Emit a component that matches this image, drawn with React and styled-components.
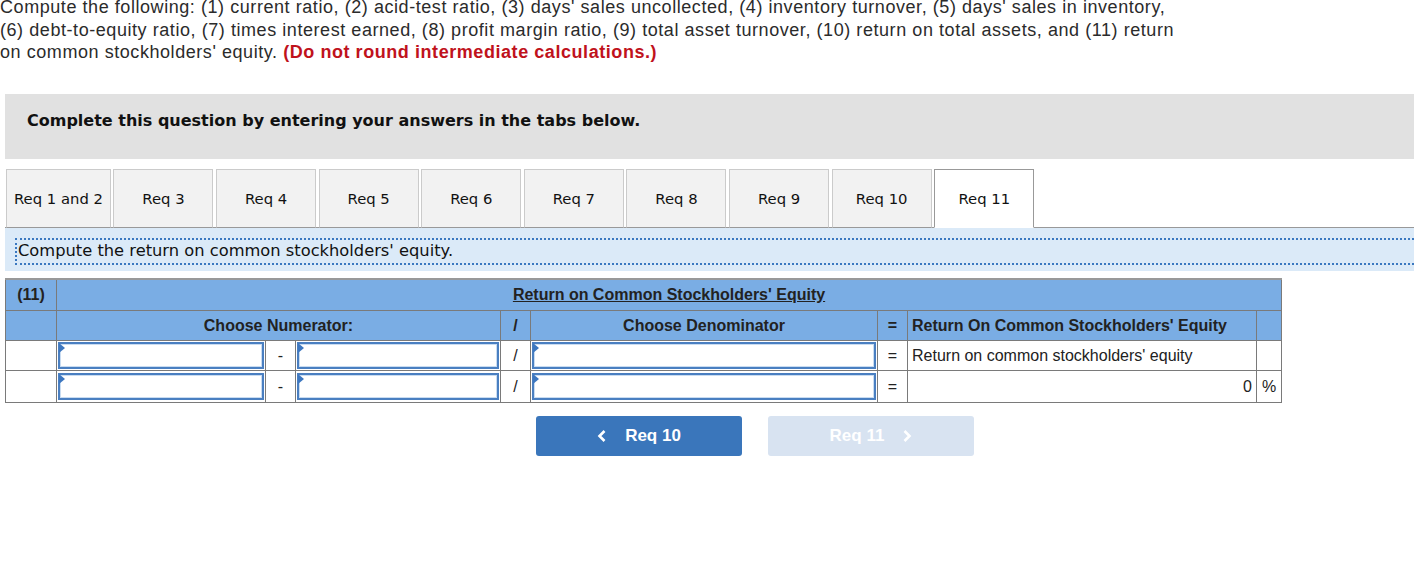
import React from 'react';
import styled, {createGlobalStyle} from 'styled-components';

const GlobalStyle = createGlobalStyle`
    html, body {
        margin: 0;
        padding: 0;
        background: #fff;
        overflow: hidden;
    }
`;

const Page = styled.div`
    width: 1414px;
    height: 567px;
    font-family: "Liberation Sans", Arial, sans-serif;
    color: #222;
`;

const Intro = styled.p`
    margin: -4px 0 0 0;
    font-size: 18px;
    letter-spacing: 0.56px;
    line-height: 22.5px;
    color: #2b2b2b;
    white-space: nowrap;
`;

const Warn = styled.strong`
    color: #c0121c;
    font-weight: 700;
`;

const Body = styled.div`
    padding-left: 5px;
    margin-top: 30px;
`;

const Prompt = styled.div`
    background: #e1e1e1;
    height: 65px;
    padding: 17px 22px 0;
    box-sizing: border-box;
    font-family: "DejaVu Sans", Verdana, sans-serif;
    font-weight: bold;
    font-size: 16px;
    color: #111;
`;

const TabRow = styled.div`
    display: flex;
    gap: 2.6px;
    margin-top: 10px;
    padding-left: 1px;
    border-bottom: 1px solid #999;
`;

const Tab = styled.div`
    min-width: 100px;
    padding: 0 7px;
    box-sizing: border-box;
    height: 59px;
    margin-bottom: -1px;
    display: flex;
    align-items: center;
    justify-content: center;
    font-family: "DejaVu Sans", Verdana, sans-serif;
    font-size: 14.8px;
    color: #111;
    background: ${p => (p.$active ? '#fff' : '#f2f2f2')};
    border: 1px solid ${p => (p.$active ? '#999' : '#cbcbcb')};
    border-bottom: 1px solid ${p => (p.$active ? '#fff' : '#999')};
`;

const Band = styled.div`
    background: #dbeaf8;
    height: 43px;
    padding-top: 10px;
    box-sizing: border-box;
`;

const BandText = styled.div`
    margin-left: 10px;
    border-top: 2px dotted #3a78c0;
    border-bottom: 2px dotted #3a78c0;
    border-left: 2px dotted #3a78c0;
    padding: 0 0 0 1px;
    height: 23px;
    line-height: 22px;
    font-family: "DejaVu Sans", Verdana, sans-serif;
    font-size: 16.3px;
    color: #111;
`;

const Table = styled.table`
    margin-top: 7px;
    border-collapse: collapse;
    table-layout: fixed;
    width: 1276px;
    font-family: "Liberation Sans", Arial, sans-serif;
    font-size: 16px;
    color: #222;
    border-top: 2px solid #999;
`;

const Cell = styled.td`
    border: 1px solid #7a7a7a;
    height: ${p => p.$h || 30}px;
    padding: ${p => (p.$pad ? '0 4px' : '0')};
    text-align: ${p => p.$align || 'center'};
    background: ${p => (p.$head ? '#7aade4' : '#fff')};
    font-weight: ${p => (p.$bold ? 'bold' : 'normal')};
    box-sizing: border-box;
    vertical-align: middle;
`;

const Title = styled.span`
    text-decoration: underline;
`;

const InputBox = styled.div`
    position: relative;
    margin: 1px;
    height: 27px;
    box-sizing: border-box;
    border: 2px solid #4a7fc1;
    box-shadow: inset 0 0 0 1px #c9dcf1;
    background: #fff;
`;

const Marker = styled.span`
    position: absolute;
    left: -1px;
    top: -1px;
    width: 0;
    height: 0;
    border-top: 5px solid transparent;
    border-bottom: 5px solid transparent;
    border-left: 6px solid #3d77c0;
`;

const Nav = styled.div`
    display: flex;
    gap: 26px;
    padding-left: 531px;
    margin-top: 13px;
`;

const NavButton = styled.div`
    width: 206px;
    height: 40px;
    border-radius: 3px;
    display: flex;
    align-items: center;
    justify-content: center;
    gap: 18px;
    font-family: "Liberation Sans", Arial, sans-serif;
    font-weight: bold;
    font-size: 17px;
    color: #fff;
    background: ${p => (p.$disabled ? '#d8e3f1' : '#3a76bb')};
`;

const Chevron = ({dir}) => (
    <svg width="10" height="14" viewBox="0 0 10 14">
        <path
            d={dir === 'left' ? 'M7.5 2 L2.5 7 L7.5 12' : 'M2.5 2 L7.5 7 L2.5 12'}
            fill="none"
            stroke="#fff"
            strokeWidth="2.6"
        />
    </svg>
);

const Input = () => (
    <InputBox>
        <Marker />
    </InputBox>
);

const tabs = ['Req 1 and 2', 'Req 3', 'Req 4', 'Req 5', 'Req 6', 'Req 7', 'Req 8', 'Req 9', 'Req 10', 'Req 11'];

function App() {
    return (
        <Page>
            <GlobalStyle />
            <Intro>
                Compute the following: (1) current ratio, (2) acid-test ratio, (3) days' sales uncollected, (4) inventory turnover, (5) days' sales in inventory,<br />
                (6) debt-to-equity ratio, (7) times interest earned, (8) profit margin ratio, (9) total asset turnover, (10) return on total assets, and (11) return<br />
                on common stockholders' equity. <Warn>(Do not round intermediate calculations.)</Warn>
            </Intro>
            <Body>
                <Prompt>Complete this question by entering your answers in the tabs below.</Prompt>
                <TabRow>
                    {tabs.map((t, i) => (
                        <Tab key={t} $active={i === tabs.length - 1}>{t}</Tab>
                    ))}
                </TabRow>
                <Band>
                    <BandText>Compute the return on common stockholders' equity.</BandText>
                </Band>
                <Table>
                    <colgroup>
                        <col style={{width: 51}} />
                        <col style={{width: 209}} />
                        <col style={{width: 30}} />
                        <col style={{width: 205}} />
                        <col style={{width: 30}} />
                        <col style={{width: 347}} />
                        <col style={{width: 30}} />
                        <col style={{width: 349}} />
                        <col style={{width: 25}} />
                    </colgroup>
                    <tbody>
                        <tr>
                            <Cell $head $bold $h={32}>(11)</Cell>
                            <Cell $head $bold colSpan={8}><Title>Return on Common Stockholders' Equity</Title></Cell>
                        </tr>
                        <tr>
                            <Cell $head />
                            <Cell $head $bold colSpan={3}>Choose Numerator:</Cell>
                            <Cell $head $bold>/</Cell>
                            <Cell $head $bold>Choose Denominator</Cell>
                            <Cell $head $bold>=</Cell>
                            <Cell $head $bold $align="left" $pad>Return On Common Stockholders' Equity</Cell>
                            <Cell $head />
                        </tr>
                        <tr>
                            <Cell />
                            <Cell><Input /></Cell>
                            <Cell>-</Cell>
                            <Cell><Input /></Cell>
                            <Cell>/</Cell>
                            <Cell><Input /></Cell>
                            <Cell>=</Cell>
                            <Cell $align="left" $pad>Return on common stockholders' equity</Cell>
                            <Cell />
                        </tr>
                        <tr>
                            <Cell $h={32} />
                            <Cell><Input /></Cell>
                            <Cell>-</Cell>
                            <Cell><Input /></Cell>
                            <Cell>/</Cell>
                            <Cell><Input /></Cell>
                            <Cell>=</Cell>
                            <Cell $align="right" $pad>0</Cell>
                            <Cell>%</Cell>
                        </tr>
                    </tbody>
                </Table>
                <Nav>
                    <NavButton><Chevron dir="left" /> Req 10</NavButton>
                    <NavButton $disabled>Req 11 <Chevron dir="right" /></NavButton>
                </Nav>
            </Body>
        </Page>
    );
}

export default App;
